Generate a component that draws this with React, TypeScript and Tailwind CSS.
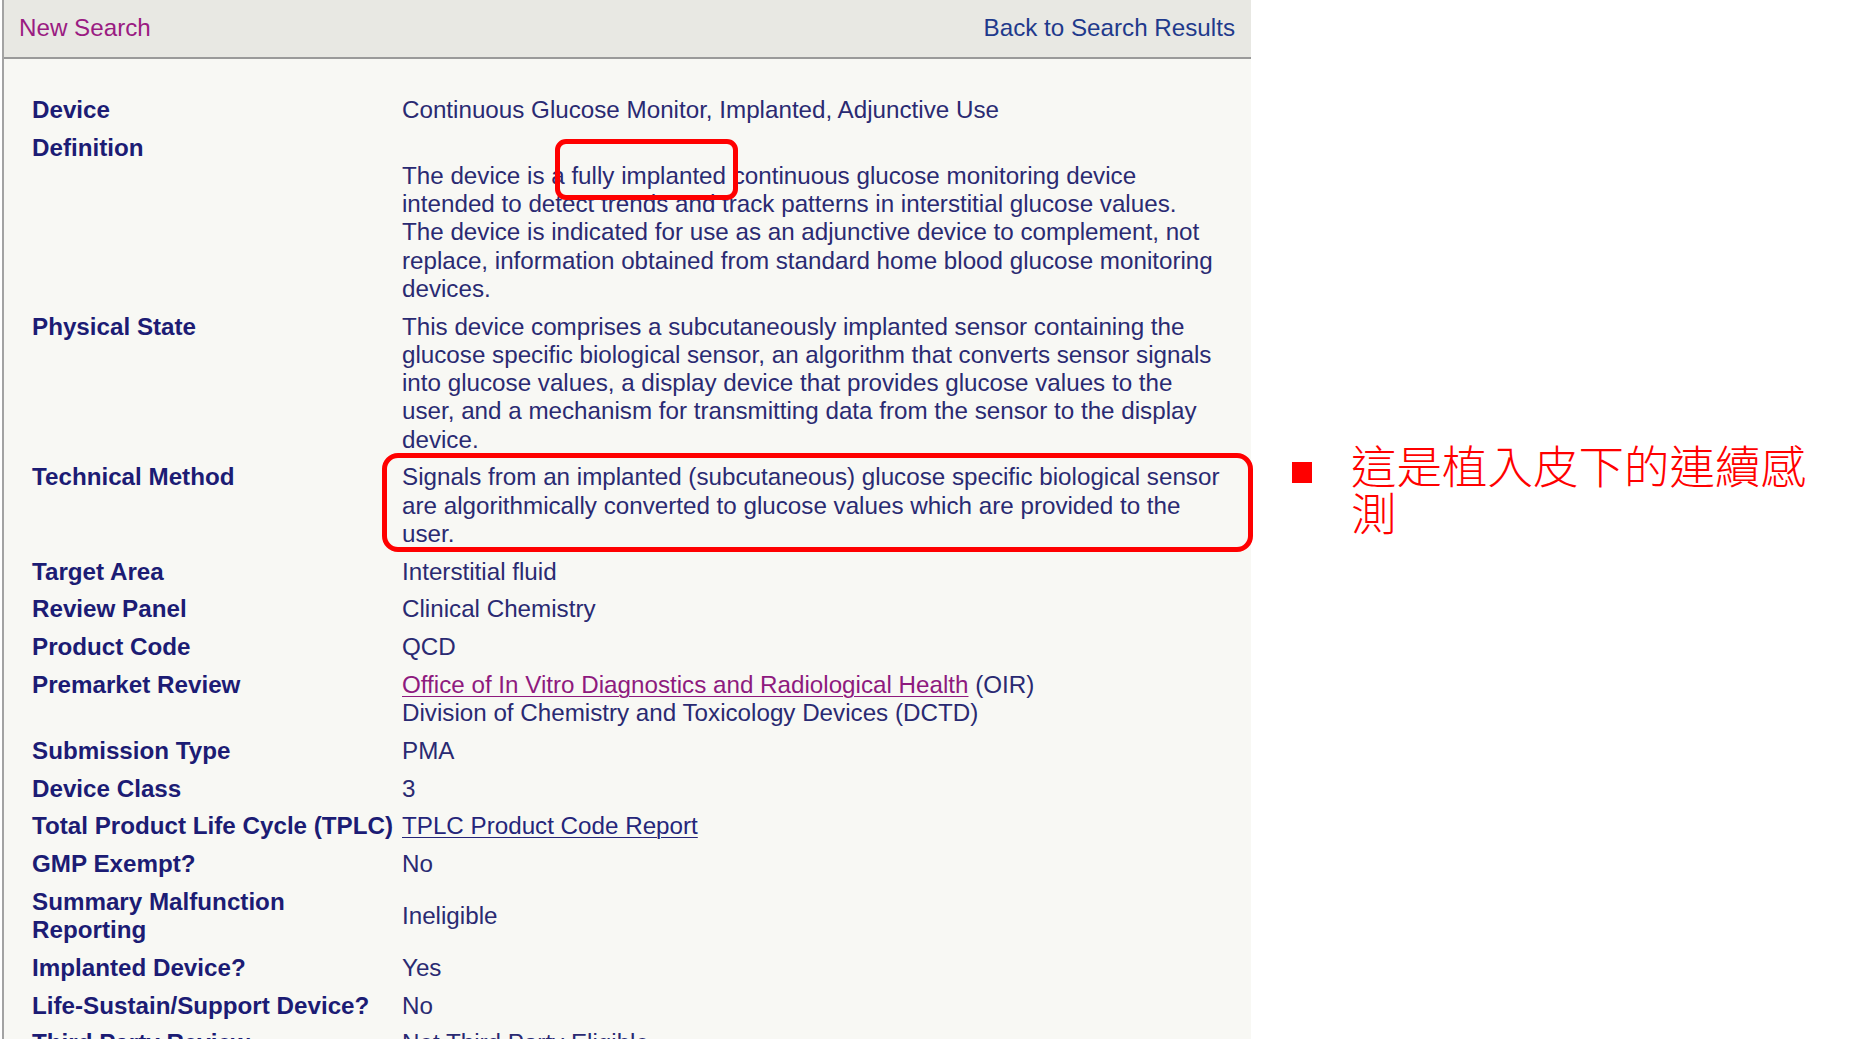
import React from "react";

type Row = {
  label: string[];
  value: React.ReactNode;
};

function Lines({ lines }: { lines: string[] }) {
  return (
    <>
      {lines.map((l, i) => (
        <React.Fragment key={i}>
          {i > 0 && <br />}
          {l}
        </React.Fragment>
      ))}
    </>
  );
}

const ROWS: Row[] = [
  { label: ["Device"], value: "Continuous Glucose Monitor, Implanted, Adjunctive Use" },
  {
    label: ["Definition"],
    value: (
      <>
        <br />
        <Lines
          lines={[
            "The device is a fully implanted continuous glucose monitoring device",
            "intended to detect trends and track patterns in interstitial glucose values.",
            "The device is indicated for use as an adjunctive device to complement, not",
            "replace, information obtained from standard home blood glucose monitoring",
            "devices."
          ]}
        />
      </>
    )
  },
  {
    label: ["Physical State"],
    value: (
      <Lines
        lines={[
          "This device comprises a subcutaneously implanted sensor containing the",
          "glucose specific biological sensor, an algorithm that converts sensor signals",
          "into glucose values, a display device that provides glucose values to the",
          "user, and a mechanism for transmitting data from the sensor to the display",
          "device."
        ]}
      />
    )
  },
  {
    label: ["Technical Method"],
    value: (
      <Lines
        lines={[
          "Signals from an implanted (subcutaneous) glucose specific biological sensor",
          "are algorithmically converted to glucose values which are provided to the",
          "user."
        ]}
      />
    )
  },
  { label: ["Target Area"], value: "Interstitial fluid" },
  { label: ["Review Panel"], value: "Clinical Chemistry" },
  { label: ["Product Code"], value: "QCD" },
  {
    label: ["Premarket Review"],
    value: (
      <>
        <a href="#" className="text-[#8e1a7e] underline decoration-1 underline-offset-[3px]">
          Office of In Vitro Diagnostics and Radiological Health
        </a>{" "}
        (OIR)
        <br />
        Division of Chemistry and Toxicology Devices (DCTD)
      </>
    )
  },
  { label: ["Submission Type"], value: "PMA" },
  { label: ["Device Class"], value: "3" },
  {
    label: ["Total Product Life Cycle (TPLC)"],
    value: (
      <a href="#" className="text-[#25257a] underline decoration-1 underline-offset-[3px]">
        TPLC Product Code Report
      </a>
    )
  },
  { label: ["GMP Exempt?"], value: "No" },
  { label: ["Summary Malfunction", "Reporting"], value: "Ineligible" },
  { label: ["Implanted Device?"], value: "Yes" },
  { label: ["Life-Sustain/Support Device?"], value: "No" },
  { label: ["Third Party Review"], value: "Not Third Party Eligible" }
];

export default function App() {
  return (
    <div className="flex min-h-screen bg-white pl-[2px] font-['Liberation_Sans',Arial,sans-serif]">
      <div className="relative w-[1249px] shrink-0 border-l-2 border-[#a3a3a3] bg-[#f8f8f4] pb-10">
        <div className="flex h-[59px] items-center justify-between border-b-2 border-[#9a9a9a] bg-[#e8e8e3] pl-[15px] pr-[16px] text-[24.2px]">
          <a href="#" className="text-[#9a1b82]">
            New Search
          </a>
          <a href="#" className="text-[#1f3a8c]">
            Back to Search Results
          </a>
        </div>

        <table className="mt-[32px] w-full table-fixed border-collapse text-[24.2px] leading-[28.25px]">
          <colgroup>
            <col className="w-[398px]" />
            <col />
          </colgroup>
          <tbody>
            {ROWS.map((r) => (
              <tr key={r.label.join(" ")}>
                <td className="py-[4.75px] pl-[28px] pr-2 align-top font-bold text-[#1c1c74]">
                  <Lines lines={r.label} />
                </td>
                <td className="whitespace-nowrap py-[4.75px] pr-4 align-middle text-[#2a2a72]">
                  {r.value}
                </td>
              </tr>
            ))}
          </tbody>
        </table>

        {/* annotation boxes drawn over the record */}
        <div className="pointer-events-none absolute left-[551px] top-[139px] h-[61px] w-[183px] rounded-[11px] border-[5px] border-[#ff0000]" />
        <div className="pointer-events-none absolute left-[378px] top-[453px] h-[99px] w-[871px] rounded-[16px] border-[5px] border-[#ff0000]" />
      </div>

      <div className="flex items-start pl-[41px] pt-[441px]">
        <span className="mt-[21px] h-[21px] w-[20px] shrink-0 bg-[#ff0000]" />
        <p className="ml-[39px] w-[470px] font-['Noto_Sans_CJK_TC',sans-serif] text-[45.5px] font-light leading-[47px] text-[#ff0000]">
          這是植入皮下的連續感測
        </p>
      </div>
    </div>
  );
}
